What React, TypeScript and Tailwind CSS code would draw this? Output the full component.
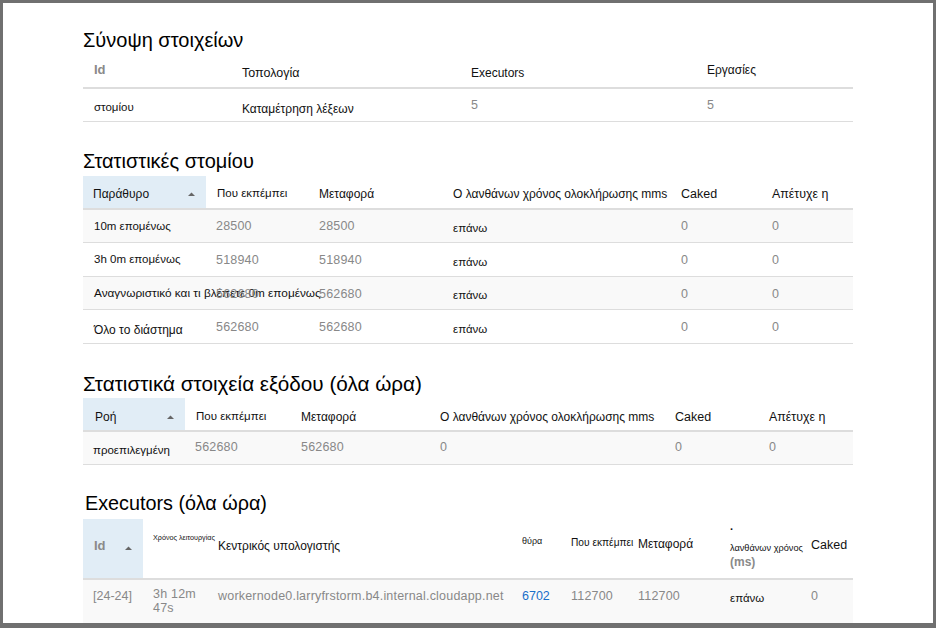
import React from 'react';

function SortArrow({ className }: { className?: string }) {
  return (
    <svg width="9" height="5" viewBox="0 0 9 5" className={`shrink-0 ${className ?? ''}`}>
      <path d="M4.5 0.5 L8 4 L1 4 Z" fill="#666" />
    </svg>
  );
}

const gray = 'text-[12.5px] text-[#888] tracking-[0.2px]';
const dark = 'text-[11.5px] text-[#111]';
const head = 'text-left font-normal text-[#111] pt-[5px]';
const headLow = 'text-left font-normal text-[#111] pt-[6px]';
const rowLine = 'border-b border-[#dddddd]';
const headLine = 'border-b-2 border-[#dddddd]';

function Heading({ children, className }: { children: React.ReactNode; className: string }) {
  return <h2 className={`leading-[24px] text-black font-normal ${className}`}>{children}</h2>;
}

const statRows = [
  { name: '10m επομένως', a: '28500', h: 'h-[34px] bg-[#f9f9f9]', nameCls: 'text-[11.5px] pt-[1px]' },
  { name: '3h 0m επομένως', a: '518940', h: 'h-[34px] bg-white', nameCls: 'text-[11.5px] pt-[1px]' },
  { name: 'Αναγνωριστικό και τι βλέπετε 0m επομένως', a: '562680', h: 'h-[33px] bg-[#f9f9f9]', nameCls: 'text-[11.8px] pt-[1px]' },
  { name: 'Όλο το διάστημα', a: '562680', h: 'h-[34px] bg-white', nameCls: 'text-[12px] pt-[6px]' },
];

export default function App() {
  return (
    <div className="w-[936px] h-[628px] overflow-hidden bg-white border-[#707070] border-t-[3px] border-l-[3px] border-r-[3px] border-b-[5px] font-['Liberation_Sans',Arial,sans-serif]">
      <div className="pl-[80px] w-[850px]">
        {/* Σύνοψη */}
        <Heading className="pt-[25px] text-[20px]">Σύνοψη στοιχείων</Heading>
        <table className="table-fixed w-[770px] border-collapse mt-[1px]">
          <colgroup>
            <col className="w-[159px]" />
            <col className="w-[229px]" />
            <col className="w-[236px]" />
            <col />
          </colgroup>
          <thead>
            <tr className={`h-[35px] ${headLine}`}>
              <th className="text-left font-bold text-[13px] text-[#8a8a8a] pl-[11px]">Id</th>
              <th className="text-left font-normal text-[12.5px] text-[#111] pt-[6px]">Τοπολογία</th>
              <th className="text-left font-normal text-[12px] text-[#111] pt-[6px]">Executors</th>
              <th className="text-left font-normal text-[12px] text-[#111]">Εργασίες</th>
            </tr>
          </thead>
          <tbody>
            <tr className={`h-[33px] ${rowLine}`}>
              <td className={`${dark} pl-[11px] pt-[6px]`}>στομίου</td>
              <td className="text-[12px] text-[#111] pt-[9px]">Καταμέτρηση λέξεων</td>
              <td className={`${gray} pt-[1px]`}>5</td>
              <td className={`${gray} pt-[1px]`}>5</td>
            </tr>
          </tbody>
        </table>

        {/* Στατιστικές στομίου */}
        <Heading className="pt-[27px] text-[20px]">Στατιστικές στομίου</Heading>
        <table className="table-fixed w-[770px] border-collapse mt-[3px]">
          <colgroup>
            <col className="w-[123px]" />
            <col className="w-[113px]" />
            <col className="w-[134px]" />
            <col className="w-[228px]" />
            <col className="w-[91px]" />
            <col />
          </colgroup>
          <thead>
            <tr className={`h-[33px] ${headLine}`}>
              <th className="bg-[#e1edf6] text-left font-normal text-[12px] text-[#111] pt-[5px] pl-[10px] pr-[10px]">
                <div className="flex items-center justify-between">
                  <span>Παράθυρο</span>
                  <SortArrow />
                </div>
              </th>
              <th className={`${head} text-[11.5px] pl-[11px]`}>Που εκπέμπει</th>
              <th className={`${head} text-[12px]`}>Μεταφορά</th>
              <th className={`${head} text-[12px]`}>Ο λανθάνων χρόνος ολοκλήρωσης mms</th>
              <th className={`${head} text-[12.5px]`}>Caked</th>
              <th className={`${head} text-[12.4px]`}>Απέτυχε η</th>
            </tr>
          </thead>
          <tbody>
            {statRows.map((r) => (
              <tr key={r.name} className={`${r.h} ${rowLine}`}>
                <td className={`${r.nameCls} text-[#111] pl-[11px] whitespace-nowrap overflow-visible`}>{r.name}</td>
                <td className={`${gray} pl-[10px] pt-[2px]`}>{r.a}</td>
                <td className={`${gray} pt-[2px]`}>{r.a}</td>
                <td className={`${dark} pt-[6px]`}>επάνω</td>
                <td className={`${gray} pt-[2px]`}>0</td>
                <td className={`${gray} pt-[2px]`}>0</td>
              </tr>
            ))}
          </tbody>
        </table>

        {/* Στατιστικά εξόδου */}
        <Heading className="pt-[28px] text-[20.7px]">Στατιστικά στοιχεία εξόδου (όλα ώρα)</Heading>
        <table className="table-fixed w-[770px] border-collapse mt-[2px]">
          <colgroup>
            <col className="w-[102px]" />
            <col className="w-[116px]" />
            <col className="w-[139px]" />
            <col className="w-[235px]" />
            <col className="w-[94px]" />
            <col />
          </colgroup>
          <thead>
            <tr className={`h-[33px] ${headLine}`}>
              <th className="bg-[#e1edf6] text-left font-normal text-[12px] text-[#111] pt-[6px] pl-[12px] pr-[10px]">
                <div className="flex items-center justify-between">
                  <span>Ροή</span>
                  <SortArrow />
                </div>
              </th>
              <th className={`${headLow} text-[11.5px] pl-[11px]`}>Που εκπέμπει</th>
              <th className={`${headLow} text-[12px]`}>Μεταφορά</th>
              <th className={`${headLow} text-[12px]`}>Ο λανθάνων χρόνος ολοκλήρωσης mms</th>
              <th className={`${headLow} text-[12.5px]`}>Caked</th>
              <th className={`${headLow} text-[12.4px]`}>Απέτυχε η</th>
            </tr>
          </thead>
          <tbody>
            <tr className={`h-[33px] ${rowLine} bg-[#f9f9f9]`}>
              <td className={`${dark} pl-[10px] pt-[5px] whitespace-nowrap`}>προεπιλεγμένη</td>
              <td className={`${gray} pl-[10px]`}>562680</td>
              <td className={gray}>562680</td>
              <td className={gray}>0</td>
              <td className={gray}>0</td>
              <td className={gray}>0</td>
            </tr>
          </tbody>
        </table>

        {/* Executors */}
        <Heading className="pt-[26px] text-[19.8px]">
          <span className="pl-[2px]">Executors (όλα ώρα)</span>
        </Heading>
        <table className="table-fixed w-[770px] border-collapse mt-[4px]">
          <colgroup>
            <col className="w-[60px]" />
            <col className="w-[75px]" />
            <col className="w-[304px]" />
            <col className="w-[49px]" />
            <col className="w-[67px]" />
            <col className="w-[92px]" />
            <col className="w-[81px]" />
            <col />
          </colgroup>
          <thead>
            <tr className={`h-[60px] ${headLine}`}>
              <th className="bg-[#e1edf6] text-left font-bold text-[13px] text-[#8a8a8a] pl-[11px] pr-[10px] pb-[4px]">
                <div className="flex items-center justify-between">
                  <span>Id</span>
                  <SortArrow className="mt-[4px]" />
                </div>
              </th>
              <th className="text-left font-normal text-[7.2px] text-[#111] pl-[10px] pb-[19px] whitespace-nowrap">Χρόνος λειτουργίας</th>
              <th className="text-left font-normal text-[12px] text-[#111] pb-[4px]">Κεντρικός υπολογιστής</th>
              <th className="text-left font-normal text-[9px] text-[#111] pb-[12px]">θύρα</th>
              <th className="text-left font-normal text-[10.2px] text-[#111] pb-[11px] whitespace-nowrap">Που εκπέμπει</th>
              <th className="text-left font-normal text-[12px] text-[#111] pb-[8px]">Μεταφορά</th>
              <th className="text-left font-normal text-[9.2px] text-[#111] leading-[14px] whitespace-nowrap pb-[8px]">
                <div className="font-bold text-[11px] leading-[13px]">.</div>
                <div className="pt-[8px]">λανθάνων χρόνος</div>
                <div className="font-bold text-[12px] text-[#8a8a8a]">(ms)</div>
              </th>
              <th className="text-left font-normal text-[12.5px] text-[#111] pb-[6px]">Caked</th>
            </tr>
          </thead>
          <tbody>
            <tr className="h-[50px] bg-[#f9f9f9] align-top">
              <td className={`${gray} pl-[10px] pt-[7px] tracking-normal whitespace-nowrap`}>[24-24]</td>
              <td className={`${gray} pl-[10px] pt-[7px] leading-[14px]`}>3h 12m 47s</td>
              <td className={`${gray} pt-[7px] whitespace-nowrap`}>workernode0.larryfrstorm.b4.internal.cloudapp.net</td>
              <td className="text-[12.5px] text-[#1a6fc9] pt-[7px]">6702</td>
              <td className={`${gray} pt-[7px]`}>112700</td>
              <td className={`${gray} pt-[7px]`}>112700</td>
              <td className={`${dark} pt-[10px]`}>επάνω</td>
              <td className={`${gray} pt-[7px]`}>0</td>
            </tr>
          </tbody>
        </table>
      </div>
    </div>
  );
}
